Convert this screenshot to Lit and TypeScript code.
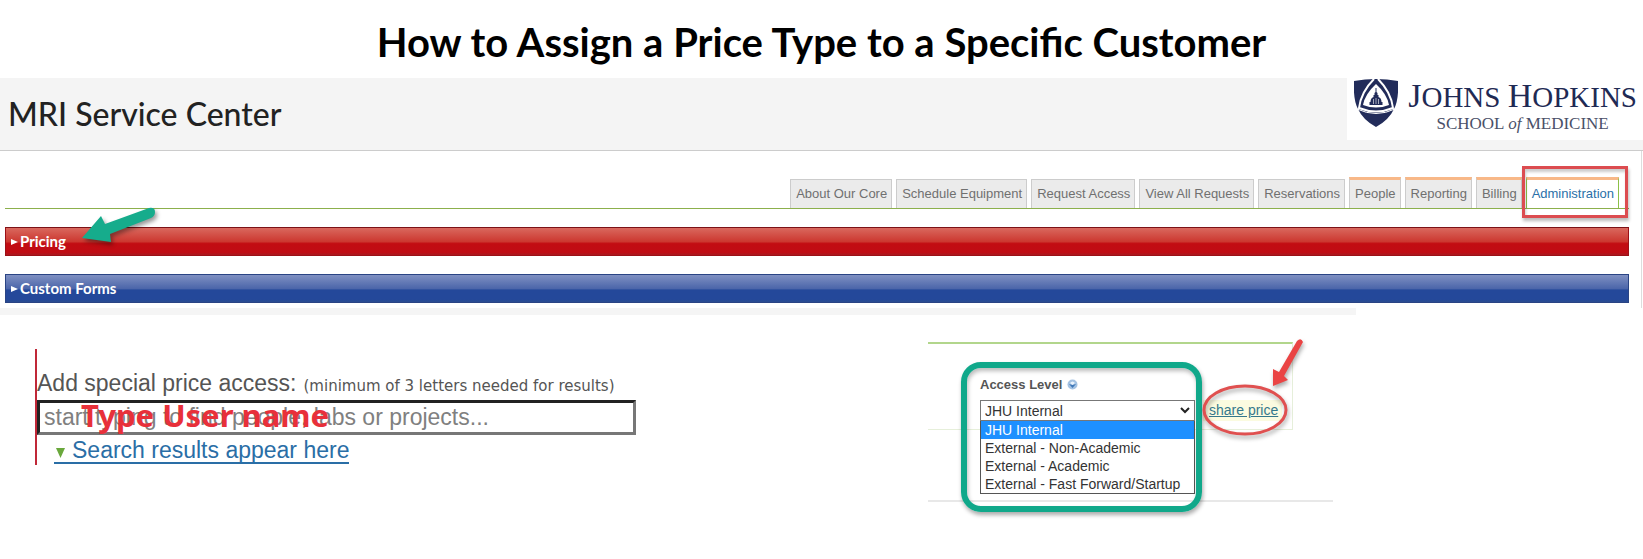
import { LitElement, html, css } from "lit";
import { customElement, property, state } from "lit/decorators.js";
import { classMap } from "lit/directives/class-map.js";

interface Tab {
  label: string;
  kind: "plain" | "staff" | "active";
}

const TABS: Tab[] = [
  { label: "About Our Core", kind: "plain" },
  { label: "Schedule Equipment", kind: "plain" },
  { label: "Request Access", kind: "plain" },
  { label: "View All Requests", kind: "plain" },
  { label: "Reservations", kind: "plain" },
  { label: "People", kind: "staff" },
  { label: "Reporting", kind: "staff" },
  { label: "Billing", kind: "staff" },
  { label: "Administration", kind: "active" },
];

const LEVELS = [
  "JHU Internal",
  "External - Non-Academic",
  "External - Academic",
  "External - Fast Forward/Startup",
];

@customElement("school-logo")
export class SchoolLogo extends LitElement {
  static styles = css`
    :host {
      display: flex;
      gap: 10px;
      background: #fff;
      color: #1f2a54;
      padding: 0 6px 0 7px;
      height: 62px;
      font-family: "Liberation Serif", serif;
      box-sizing: border-box;
    }
    .shield {
      width: 44px;
      height: 50px;
    }
    .words {
      display: flex;
      flex-direction: column;
      align-items: center;
      white-space: nowrap;
    }
    .name {
      font-size: 29px;
      line-height: 36px;
      height: 36px;
    }
    .big {
      font-size: 34px;
    }
    .school {
      font-size: 17px;
      line-height: 20px;
      color: #4a5068;
    }
  `;
  render() {
    return html`
      <svg class="shield" viewBox="0 0 44 50" aria-hidden="true">
        <path d="M0 3 Q11 1 22 1 Q33 1 44 3 Q45 22 40 31 Q35 42 22 49 Q9 42 4 31 Q-1 22 0 3Z" fill="#222c5a" />
        <path d="M20 1 Q7 14 5 30 Q22 37 39 30 Q37 14 24 1" fill="none" stroke="#fff" stroke-width="2" />
        <path d="M3 31 Q22 40 41 31" fill="none" stroke="#fff" stroke-width="1" />
        <path d="M22 6 Q11 16 9 27 Q22 32 35 27 Q33 16 22 6Z" fill="#fff" />
        <path
          d="M21.500 10h1v4l1 1v2h1v2q3 1 3 5h1v3h-13v-3h1q0-4 3-5v-2h1v-2l1-1Z"
          fill="#222c5a"
        />
        <path d="M19.500 21v5M22 20v6M24.500 21v5" stroke="#fff" stroke-width="0.600" />
      </svg>
      <div class="words">
        <div class="name">
          <span class="big">J</span>OHNS <span class="big">H</span>OPKINS
        </div>
        <div class="school">SCHOOL <i>of</i> MEDICINE</div>
      </div>
    `;
  }
}

@customElement("section-bar")
export class SectionBar extends LitElement {
  @property() tone = "red";
  @property() label = "";
  static styles = css`
    :host {
      display: block;
    }
    .bar {
      display: flex;
      align-items: center;
      width: 100%;
      height: 29px;
      padding: 0 4px 2px;
      box-sizing: border-box;
      color: #fff;
      font: 700 15px/20px Lato, sans-serif;
      text-align: left;
    }
    .red {
      border: 1px solid #9c1016;
      border-top-color: #7c1216;
      background: linear-gradient(#d9685e, #cc3830 50%, #c20c12 58%, #c00c14 90%, #a81820);
    }
    .blue {
      border: 1px solid #2a4484;
      background: linear-gradient(#7f90c2, #4c66aa 50%, #24489a 56%, #24489a 90%, #2a4c90);
    }
    .mark {
      width: 9px;
      height: 8px;
      fill: #fff;
      margin-right: 1px;
      margin-top: 3px;
    }
  `;
  render() {
    return html`<button
      class=${classMap({ bar: true, red: this.tone === "red", blue: this.tone === "blue" })}
    >
      <svg class="mark" viewBox="0 0 9 8" aria-hidden="true"><path d="M1 1L8 4L1 7Z" /></svg>
      ${this.label}
    </button>`;
  }
}

@customElement("access-level")
export class AccessLevel extends LitElement {
  @state() selected = LEVELS[0];
  static styles = css`
    :host {
      display: block;
      position: relative;
      font-family: "Liberation Sans", Arial, sans-serif;
    }
    .row {
      width: 365px;
      height: 88px;
      box-sizing: border-box;
      border: 1px solid #e6efda;
      border-left: 0;
      border-top: 2px solid #b2d68c;
      padding: 32px 0 0 52px;
      display: grid;
      grid-template-columns: 215px auto;
      grid-template-rows: 24px 21px;
      column-gap: 8px;
      justify-content: start;
    }
    .caption {
      grid-column: 1 / 3;
      display: flex;
      gap: 5px;
      font: 700 13px/18px "Liberation Sans", Arial, sans-serif;
      color: #555;
    }
    .help {
      width: 11px;
      height: 11px;
      margin-top: 3px;
    }
    .picker {
      position: relative;
      display: flex;
    }
    .select {
      appearance: none;
      width: 100%;
      height: 21px;
      border: 1px solid #777;
      border-radius: 0;
      background: #fff;
      padding: 0 4px;
      color: #333;
      font: 14px/18px "Liberation Sans", Arial, sans-serif;
    }
    .chevron {
      position: absolute;
      right: 5px;
      top: 7px;
      width: 10px;
      height: 7px;
    }
    .list {
      position: absolute;
      z-index: 1;
      top: 100%;
      left: 0;
      width: 100%;
      box-sizing: border-box;
      margin: 0;
      padding: 0;
      list-style: none;
      border: 1px solid #555;
      border-top: 0;
      background: #fff;
    }
    .option {
      padding: 0 4px;
      font-size: 14px;
      line-height: 18px;
      color: #333;
      white-space: nowrap;
    }
    .chosen {
      background: #1e90ff;
      color: #fff;
    }
    .share {
      background: #fbfbe0;
      padding: 0 4px 0 6px;
      font-size: 14px;
      line-height: 20px;
    }
    .link {
      color: #35788c;
    }
    .rule {
      height: 70px;
      width: 405px;
      border-bottom: 2px solid #e8e8e8;
    }
    .frame {
      position: absolute;
      z-index: 2;
      left: 33px;
      top: 20px;
      width: 241px;
      height: 150px;
      box-sizing: border-box;
      border: 6px solid #10a88a;
      border-radius: 20px;
      box-shadow: 1px 3px 4px #0005, inset 1px 3px 4px #0004;
      pointer-events: none;
    }
    .marks {
      position: absolute;
      z-index: 3;
      left: 268px;
      top: -8px;
      width: 120px;
      height: 110px;
      pointer-events: none;
      filter: drop-shadow(1px 3px 2px #0005);
    }
  `;
  render() {
    return html`
      <div class="row">
        <label class="caption" for="level">
          Access Level
          <svg class="help" viewBox="0 0 11 11" aria-hidden="true">
            <circle cx="5.500" cy="5.500" r="5" fill="#a4c2e2" />
            <path d="M2 5L5.500 9L9 5L5.500 6Z" fill="#3f78b8" />
            <path d="M3 4Q5.500 1 8 4L5.500 6Z" fill="#e8f2fc" />
          </svg>
        </label>
        <div class="picker">
          <select
            class="select"
            id="level"
            @change=${(e: Event) => (this.selected = (e.target as HTMLSelectElement).value)}
          >
            ${LEVELS.map((l) => html`<option ?selected=${l === this.selected}>${l}</option>`)}
          </select>
          <svg class="chevron" viewBox="0 0 10 7" aria-hidden="true">
            <path d="M1 1L5 5L9 1" fill="none" stroke="#222" stroke-width="2" />
          </svg>
          <ul class="list" role="listbox" aria-label="Access Level">
            ${LEVELS.map(
              (l) => html`<li
                class=${classMap({ option: true, chosen: l === this.selected })}
                role="option"
                aria-selected=${l === this.selected}
                @click=${() => (this.selected = l)}
              >${l}</li>`
            )}
          </ul>
        </div>
        <div class="share"><a class="link" href="#share">share price</a></div>
      </div>
      <div class="rule"></div>
      <div class="frame"></div>
      <svg class="marks" viewBox="0 0 120 110" aria-hidden="true">
        <ellipse cx="49" cy="76" rx="41" ry="24" fill="none" stroke="#e05050" stroke-width="3" />
        <path
          d="M101 7Q105 3 107 8L88 42L92 46L77 52L77 35L83 38Z"
          fill="#ea4444"
        />
      </svg>
    `;
  }
}

@customElement("app-root")
export class AppRoot extends LitElement {
  static styles = css`
    :host {
      display: block;
      background: #fff;
      font-family: "Liberation Sans", Arial, sans-serif;
    }
    .title {
      margin: 0;
      padding: 18px 0 12px;
      text-align: center;
      font: 700 40px/48px Lato, sans-serif;
      color: #000;
    }
    .header {
      display: flex;
      justify-content: space-between;
      height: 73px;
      box-sizing: border-box;
      border-bottom: 1px solid #ccc;
      background: #f4f4f4;
    }
    .center {
      margin: 0;
      padding: 14px 0 0 8px;
      font: 500 32px/44px "Lato Medium", Lato, sans-serif;
      color: #222;
    }
    .panel {
      margin-right: 1px;
      padding: 28px 12px 5px 5px;
      border-right: 1px solid #ddd;
    }
    .tabs {
      display: flex;
      justify-content: flex-end;
      align-items: flex-end;
      gap: 4px;
      padding-right: 10px;
      height: 30px;
      box-sizing: border-box;
      border-bottom: 1px solid #8cb04c;
      margin-bottom: 18px;
    }
    .tab {
      height: 29px;
      box-sizing: border-box;
      padding: 0 4px 0 5px;
      border: 1px solid #ccc;
      border-bottom: 0;
      background: #ebebeb;
      color: #707070;
      font-size: 13px;
      line-height: 28px;
      text-decoration: none;
      white-space: nowrap;
    }
    .staff,
    .active {
      height: 31px;
      border-top: 3px solid #f8b888;
    }
    .active {
      position: relative;
      border-left: 1px solid #8cc048;
      border-right: 1px solid #8cc048;
      background: #fff;
      color: #2a70a8;
    }
    .active::after {
      content: "";
      position: absolute;
      inset: -14px -10px -10px -5px;
      border: 3px solid #dc4c50;
      box-shadow: 1px 3px 3px #0004, inset 1px 3px 3px #0003;
    }
    .bars {
      position: relative;
      display: grid;
      gap: 18px;
    }
    .arrow {
      position: absolute;
      left: 70px;
      top: -24px;
      width: 90px;
      height: 50px;
      filter: drop-shadow(2px 3px 2px #0006);
      pointer-events: none;
    }
    .strip {
      height: 7px;
      margin-right: 287px;
      background: #f5f5f5;
    }
    .lower {
      display: grid;
      grid-template-columns: 893fr 715fr;
      padding: 27px 0 44px 35px;
      align-items: start;
    }
    .search {
      margin-top: 7px;
      border-left: 2px solid #c02838;
      height: 116px;
      box-sizing: border-box;
      padding-top: 20px;
    }
    .label {
      display: flex;
      align-items: baseline;
      gap: 7px;
      line-height: 28px;
      font-size: 23px;
      color: #555;
      white-space: nowrap;
    }
    .hint {
      font-family: "DejaVu Sans", sans-serif;
      font-size: 15px;
    }
    .field {
      position: relative;
      width: 599px;
    }
    .box {
      display: block;
      width: 100%;
      height: 35px;
      box-sizing: border-box;
      padding: 0 4px;
      border: 3px solid;
      border-color: #222 #777 #777 #222;
      border-radius: 0;
      background: #fff;
      font: 23px/28px "Liberation Sans", Arial, sans-serif;
    }
    .box::placeholder {
      color: #808080;
      opacity: 1;
    }
    .note {
      position: absolute;
      left: 44px;
      top: 0;
      font: 700 31px/30px "Noto Sans", sans-serif;
      color: #e8303a;
      white-space: nowrap;
      pointer-events: none;
    }
    .results {
      display: inline-flex;
      align-items: baseline;
      gap: 7px;
      margin: 3px 0 0 17px;
      line-height: 24px;
      font-size: 23px;
      color: #2a6ea6;
      text-decoration: none;
      border-bottom: 2px solid #2a6ea6;
      white-space: nowrap;
    }
    .down {
      width: 9px;
      height: 11px;
      margin-left: 2px;
    }
  `;
  render() {
    return html`
      <h1 class="title">How to Assign a Price Type to a Specific Customer</h1>
      <header class="header">
        <h2 class="center">MRI Service Center</h2>
        <school-logo></school-logo>
      </header>
      <main>
        <div class="panel">
          <nav class="tabs">
            ${TABS.map(
              (t) => html`<a
                class=${classMap({ tab: true, staff: t.kind === "staff", active: t.kind === "active" })}
                href="#"
                >${t.label}</a
              >`
            )}
          </nav>
          <div class="bars">
            <section-bar tone="red" label="Pricing"></section-bar>
            <section-bar tone="blue" label="Custom Forms"></section-bar>
            <svg class="arrow" viewBox="0 0 90 50" aria-hidden="true">
              <path
                d="M7 35L26 13L30 21L74 5Q80 4 80 9Q80 13 76 15L35 31L36 39Z"
                fill="#16ac8c"
              />
            </svg>
          </div>
        </div>
        <div class="strip"></div>
        <div class="lower">
          <div class="search">
            <label class="label" for="who">
              Add special price access:
              <span class="hint">(minimum of 3 letters needed for results)</span>
            </label>
            <div class="field">
              <input
                class="box"
                id="who"
                type="text"
                placeholder="start typing to find people, labs or projects..."
              />
              <div class="note">Type User name</div>
            </div>
            <a class="results" href="#results">
              <svg class="down" viewBox="0 0 9 11" aria-hidden="true">
                <path d="M0 1H9L4.500 11Z" fill="#6aa83c" />
              </svg>
              Search results appear here
            </a>
          </div>
          <access-level></access-level>
        </div>
      </main>
    `;
  }
}
